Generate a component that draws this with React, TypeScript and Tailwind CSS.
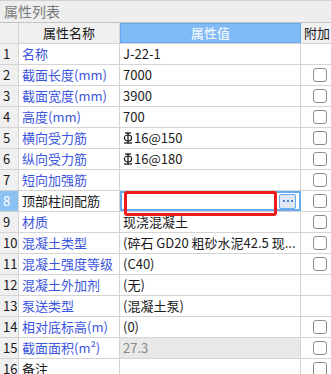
import React from 'react';

type Row = {
    name: string;
    value: string;
    check: boolean;
    rebar?: boolean;
    black?: boolean;
    grey?: boolean;
    editing?: boolean;
};

const rows: Row[] = [
    { name: '名称', value: 'J-22-1', check: false },
    { name: '截面长度(mm)', value: '7000', check: true },
    { name: '截面宽度(mm)', value: '3900', check: true },
    { name: '高度(mm)', value: '700', check: true },
    { name: '横向受力筋', value: '16@150', check: true, rebar: true },
    { name: '纵向受力筋', value: '16@180', check: true, rebar: true },
    { name: '短向加强筋', value: '', check: true },
    { name: '顶部柱间配筋', value: '', check: true, black: true, editing: true },
    { name: '材质', value: '现浇混凝土', check: true },
    { name: '混凝土类型', value: '(碎石 GD20 粗砂水泥42.5 现...', check: true },
    { name: '混凝土强度等级', value: '(C40)', check: true },
    { name: '混凝土外加剂', value: '(无)', check: false },
    { name: '泵送类型', value: '(混凝土泵)', check: false },
    { name: '相对底标高(m)', value: '(0)', check: true },
    { name: '截面面积(m²)', value: '27.3', check: true, grey: true },
    { name: '备注', value: '', check: true, black: true },
];

// 三级钢符号
function RebarMark() {
    return (
        <svg width="10" height="12" viewBox="0 0 10 12" className="mr-[1px] inline-block">
            <line x1="5" y1="0.5" x2="5" y2="11.5" stroke="#111" strokeWidth="1.2" />
            <line x1="2" y1="1" x2="8" y2="1" stroke="#111" strokeWidth="1.2" />
            <ellipse cx="5" cy="6" rx="3.6" ry="3" fill="none" stroke="#111" strokeWidth="1.2" />
            <line x1="1" y1="11" x2="9" y2="11" stroke="#111" strokeWidth="1.2" />
        </svg>
    );
}

function Checkbox() {
    return <div className="h-[14px] w-[14px] rounded-[3px] border border-[#8c8c8c] bg-white" />;
}

export default function App() {
    return (
        <div
            className="h-[374px] w-[331px] overflow-hidden bg-white text-[13px] text-[#1a1a1a]"
            style={{ fontFamily: '"Noto Sans CJK SC", "Noto Sans", sans-serif' }}
        >
            <div className="flex h-[23px] items-center border-t border-b border-t-[#d0d0d0] border-b-[#c4c4c4] bg-[#eeeeee] pl-[4px] text-[14px] text-[#7a7a7a]">
                属性列表
            </div>
            <div className="w-[360px]">
                <div className="flex h-[21px] border-b border-[#d4d4d4] bg-[#f0f0f0] leading-[20px]">
                    <div className="w-[19px] border-r border-[#d4d4d4]" />
                    <div className="w-[101px] border-r border-[#d4d4d4] text-center">属性名称</div>
                    <div className="w-[181px] border border-[#62a8f2] bg-[#80bbf7] text-center leading-[18px] text-white">属性值</div>
                    <div className="flex-1 pl-[3px]">附加</div>
                </div>
                {rows.map((r, i) => (
                    <div key={i} className="flex h-[21px] border-b border-[#d4d4d4] leading-[20px]">
                        <div
                            className={`w-[19px] border-r border-[#d4d4d4] pl-[3px] ${
                                r.editing ? 'bg-[#8cc2f2] text-white' : 'bg-[#f0f0f0]'
                            }`}
                        >
                            {i + 1}
                        </div>
                        <div
                            className={`w-[101px] truncate border-r border-[#d4d4d4] pl-[3px] ${
                                r.black ? 'text-[#1a1a1a]' : 'text-[#3b55dc]'
                            }`}
                        >
                            {r.name}
                        </div>
                        {r.editing ? (
                            <div className="relative flex w-[181px] items-center justify-end border-2 border-[#6aaaf0] pr-[3px]">
                                <div className="absolute left-[2px] top-[-2px] h-[25px] w-[153px] rounded-[3px] border-[3px] border-[#ee1c1c]" />
                                <div className="flex h-[15px] w-[17px] items-center justify-center gap-[2px] rounded-[2px] border border-[#6aaaf0] bg-[#dde8f4]">
                                    <span className="h-[2px] w-[2px] bg-[#4a80c4]" />
                                    <span className="h-[2px] w-[2px] bg-[#4a80c4]" />
                                    <span className="h-[2px] w-[2px] bg-[#4a80c4]" />
                                </div>
                            </div>
                        ) : (
                            <div
                                className={`flex w-[181px] items-center truncate border-r border-[#d4d4d4] pl-[3px] ${
                                    r.grey ? 'bg-[#e8e8e8] text-[#8a8a8a]' : ''
                                }`}
                            >
                                {r.rebar && <RebarMark />}
                                {r.value}
                            </div>
                        )}
                        <div className="flex flex-1 items-center pl-[12px]">{r.check && <Checkbox />}</div>
                    </div>
                ))}
            </div>
        </div>
    );
}
